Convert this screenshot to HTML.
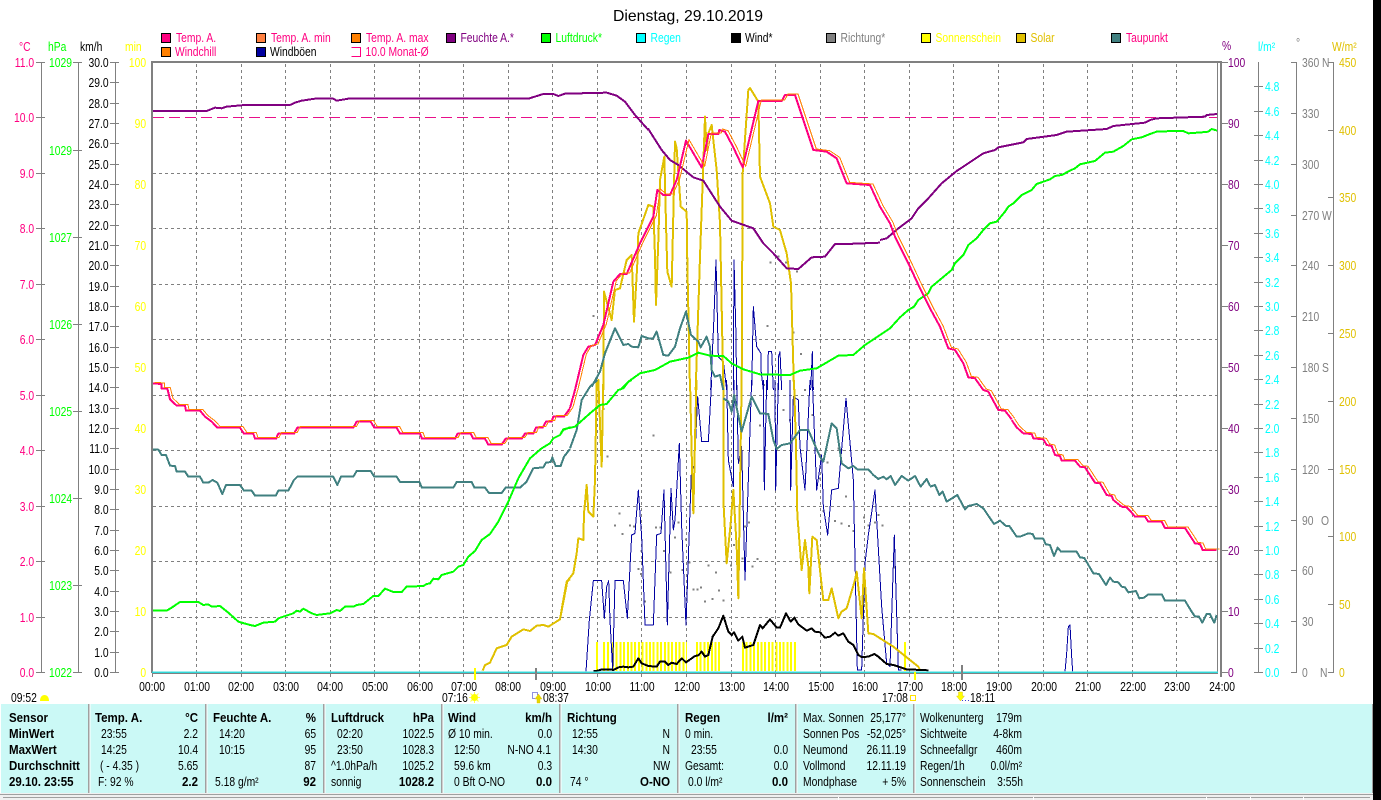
<!DOCTYPE html>
<html><head><meta charset="utf-8"><title>Dienstag, 29.10.2019</title>
<style>
html,body{margin:0;padding:0;background:#000;width:1381px;height:800px;overflow:hidden}
svg{display:block;position:absolute;left:0;top:0}
text{font:13px "Liberation Sans",sans-serif;transform-box:fill-box;transform-origin:0 0;transform:scaleX(.795)}
text.e{text-anchor:end;transform-origin:100% 0}
text.m{text-anchor:middle;transform-origin:50% 0}
text.b{font-weight:bold;transform:scaleX(.885)}
text.t{font-size:16px;transform:none}
.ax line{stroke:#808080;stroke-width:1}
polyline{fill:none;stroke-linejoin:round}
.p{fill:none}
</style></head><body>
<svg width="1381" height="800" viewBox="0 0 1381 800" xmlns="http://www.w3.org/2000/svg">
<rect x="0" y="0" width="1373" height="800" fill="#fff"/>
<text class="t" x="613" y="21" textLength="150" lengthAdjust="spacingAndGlyphs">Dienstag, 29.10.2019</text>

<!-- legend -->
<g stroke="#000" stroke-width="1" shape-rendering="crispEdges">
<rect x="161.5" y="33.5" width="9" height="9" fill="#ff0080"/>
<rect x="256.5" y="33.5" width="9" height="9" fill="#ff8040"/>
<rect x="351.5" y="33.5" width="9" height="9" fill="#ff8000"/>
<rect x="446.5" y="33.5" width="9" height="9" fill="#800080"/>
<rect x="541.5" y="33.5" width="9" height="9" fill="#00ff00"/>
<rect x="636.5" y="33.5" width="9" height="9" fill="#00ffff"/>
<rect x="731.5" y="33.5" width="9" height="9" fill="#000"/>
<rect x="826.5" y="33.5" width="9" height="9" fill="#808080"/>
<rect x="921.5" y="33.5" width="9" height="9" fill="#ffff00"/>
<rect x="1016.5" y="33.5" width="9" height="9" fill="#e0c000"/>
<rect x="1111.5" y="33.5" width="9" height="9" fill="#408080"/>
<rect x="161.5" y="47.5" width="9" height="9" fill="#ff8000"/>
<rect x="256.5" y="47.5" width="9" height="9" fill="#0000a0"/>
</g>
<path d="M351.5 47.5H360.5V56.5H351.5" fill="none" stroke="#ff0080" shape-rendering="crispEdges"/>
<g fill="#ff0080">
<text x="176" y="42">Temp. A.</text><text x="271" y="42">Temp. A. min</text><text x="366" y="42">Temp. A. max</text>
<text x="1126" y="42">Taupunkt</text><text x="175" y="56">Windchill</text><text x="365.5" y="56">10.0 Monat-Ø</text>
</g>
<text x="460.5" y="42" fill="#800080">Feuchte A.*</text>
<text x="555.5" y="42" fill="#00ff00">Luftdruck*</text>
<text x="650.5" y="42" fill="#00ffff">Regen</text>
<text x="745" y="42" fill="#000">Wind*</text>
<text x="840.5" y="42" fill="#808080">Richtung*</text>
<text x="935.5" y="42" fill="#ffff00">Sonnenschein</text>
<text x="1030.5" y="42" fill="#e0c000">Solar</text>
<text x="270" y="56" fill="#000">Windböen</text>

<!-- axis titles -->
<text x="19" y="51" fill="#ff0080">°C</text>
<text x="48" y="51" fill="#00ff00">hPa</text>
<text x="80" y="51" fill="#000">km/h</text>
<text x="125" y="51" fill="#ffff00">min</text>
<text x="1222" y="50" fill="#800080">%</text>
<text x="1258" y="51" fill="#00ffff">l/m²</text>
<text x="1296" y="47" fill="#808080">°</text>
<text x="1332" y="51" fill="#e0c000">W/m²</text>

<!-- axis lines and ticks -->
<g class="ax" shape-rendering="crispEdges">
<line x1="41.5" y1="62" x2="41.5" y2="672"/><line x1="78.5" y1="62" x2="78.5" y2="672"/><line x1="115.5" y1="62" x2="115.5" y2="672"/>
<line x1="1258.5" y1="62" x2="1258.5" y2="672"/><line x1="1296.5" y1="62" x2="1296.5" y2="672"/><line x1="1333.5" y1="62" x2="1333.5" y2="672"/>
</g>
<path shape-rendering="crispEdges" stroke="#808080" fill="none" d="
M36 62.5h9M36 117.5h9M36 173.5h9M36 228.5h9M36 284.5h9M36 339.5h9M36 395.5h9M36 450.5h9M36 506.5h9M36 561.5h9M36 617.5h9M36 672.5h9
M73 62.5h9M73 150.5h9M73 237.5h9M73 324.5h9M73 411.5h9M73 498.5h9M73 585.5h9M73 672.5h9
M110 62.5h9M110 82.5h9M110 103.5h9M110 123.5h9M110 143.5h9M110 164.5h9M110 184.5h9M110 204.5h9M110 225.5h9M110 245.5h9M110 265.5h9M110 286.5h9M110 306.5h9M110 326.5h9M110 347.5h9M110 367.5h9M110 387.5h9M110 408.5h9M110 428.5h9M110 448.5h9M110 469.5h9M110 489.5h9M110 509.5h9M110 530.5h9M110 550.5h9M110 570.5h9M110 591.5h9M110 611.5h9M110 631.5h9M110 652.5h9M110 672.5h9
M1221 62.5h7M1221 123.5h7M1221 184.5h7M1221 245.5h7M1221 306.5h7M1221 367.5h7M1221 428.5h7M1221 489.5h7M1221 550.5h7M1221 611.5h7M1221 672.5h7
M1254 86.5h9M1254 111.5h9M1254 135.5h9M1254 160.5h9M1254 184.5h9M1254 208.5h9M1254 233.5h9M1254 257.5h9M1254 282.5h9M1254 306.5h9M1254 330.5h9M1254 355.5h9M1254 379.5h9M1254 404.5h9M1254 428.5h9M1254 452.5h9M1254 477.5h9M1254 501.5h9M1254 526.5h9M1254 550.5h9M1254 574.5h9M1254 599.5h9M1254 623.5h9M1254 648.5h9M1254 672.5h9
M1291 62.5h6M1291 113.5h6M1291 164.5h6M1291 215.5h6M1291 265.5h6M1291 316.5h6M1291 367.5h6M1291 418.5h6M1291 469.5h6M1291 520.5h6M1291 570.5h6M1291 621.5h6M1291 672.5h6
M1328 62.5h6M1328 130.5h6M1328 197.5h6M1328 265.5h6M1328 333.5h6M1328 401.5h6M1328 469.5h6M1328 536.5h6M1328 604.5h6M1328 672.5h6"/>

<!-- left labels -->
<g fill="#ff0080">
<text class="e" x="34" y="67">11.0</text><text class="e" x="34" y="122">10.0</text><text class="e" x="34" y="178">9.0</text><text class="e" x="34" y="233">8.0</text><text class="e" x="34" y="289">7.0</text><text class="e" x="34" y="344">6.0</text><text class="e" x="34" y="400">5.0</text><text class="e" x="34" y="455">4.0</text><text class="e" x="34" y="511">3.0</text><text class="e" x="34" y="566">2.0</text><text class="e" x="34" y="622">1.0</text><text class="e" x="34" y="677">0.0</text>
</g>
<g fill="#00ff00">
<text class="e" x="72" y="67">1029</text><text class="e" x="72" y="155">1029</text><text class="e" x="72" y="242">1027</text><text class="e" x="72" y="329">1026</text><text class="e" x="72" y="416">1025</text><text class="e" x="72" y="503">1024</text><text class="e" x="72" y="590">1023</text><text class="e" x="72" y="677">1022</text>
</g>
<g fill="#000">
<text class="e" x="108.5" y="67">30.0</text><text class="e" x="108.5" y="87">29.0</text><text class="e" x="108.5" y="108">28.0</text><text class="e" x="108.5" y="128">27.0</text><text class="e" x="108.5" y="148">26.0</text><text class="e" x="108.5" y="169">25.0</text><text class="e" x="108.5" y="189">24.0</text><text class="e" x="108.5" y="209">23.0</text><text class="e" x="108.5" y="230">22.0</text><text class="e" x="108.5" y="250">21.0</text><text class="e" x="108.5" y="270">20.0</text><text class="e" x="108.5" y="291">19.0</text><text class="e" x="108.5" y="311">18.0</text><text class="e" x="108.5" y="331">17.0</text><text class="e" x="108.5" y="352">16.0</text><text class="e" x="108.5" y="372">15.0</text><text class="e" x="108.5" y="392">14.0</text><text class="e" x="108.5" y="413">13.0</text><text class="e" x="108.5" y="433">12.0</text><text class="e" x="108.5" y="453">11.0</text><text class="e" x="108.5" y="474">10.0</text><text class="e" x="108.5" y="494">9.0</text><text class="e" x="108.5" y="514">8.0</text><text class="e" x="108.5" y="535">7.0</text><text class="e" x="108.5" y="555">6.0</text><text class="e" x="108.5" y="575">5.0</text><text class="e" x="108.5" y="596">4.0</text><text class="e" x="108.5" y="616">3.0</text><text class="e" x="108.5" y="636">2.0</text><text class="e" x="108.5" y="657">1.0</text><text class="e" x="108.5" y="677">0.0</text>
</g>
<g fill="#ffff00">
<text class="e" x="146" y="67">100</text><text class="e" x="146" y="128">90</text><text class="e" x="146" y="189">80</text><text class="e" x="146" y="250">70</text><text class="e" x="146" y="311">60</text><text class="e" x="146" y="372">50</text><text class="e" x="146" y="433">40</text><text class="e" x="146" y="494">30</text><text class="e" x="146" y="555">20</text><text class="e" x="146" y="616">10</text><text class="e" x="146" y="677">0</text>
</g>

<!-- right labels -->
<g fill="#800080">
<text x="1228" y="67">100</text><text x="1228" y="128">90</text><text x="1228" y="189">80</text><text x="1228" y="250">70</text><text x="1228" y="311">60</text><text x="1228" y="372">50</text><text x="1228" y="433">40</text><text x="1228" y="494">30</text><text x="1228" y="555">20</text><text x="1228" y="616">10</text><text x="1228" y="677">0</text>
</g>
<g fill="#00ffff">
<text x="1265" y="91">4.8</text><text x="1265" y="116">4.6</text><text x="1265" y="140">4.4</text><text x="1265" y="165">4.2</text><text x="1265" y="189">4.0</text><text x="1265" y="213">3.8</text><text x="1265" y="238">3.6</text><text x="1265" y="262">3.4</text><text x="1265" y="287">3.2</text><text x="1265" y="311">3.0</text><text x="1265" y="335">2.8</text><text x="1265" y="360">2.6</text><text x="1265" y="384">2.4</text><text x="1265" y="409">2.2</text><text x="1265" y="433">2.0</text><text x="1265" y="457">1.8</text><text x="1265" y="482">1.6</text><text x="1265" y="506">1.4</text><text x="1265" y="531">1.2</text><text x="1265" y="555">1.0</text><text x="1265" y="579">0.8</text><text x="1265" y="604">0.6</text><text x="1265" y="628">0.4</text><text x="1265" y="653">0.2</text><text x="1265" y="677">0.0</text>
</g>
<g fill="#808080">
<text x="1302" y="67">360</text><text x="1322" y="67">N</text><text x="1302" y="118">330</text><text x="1302" y="169">300</text><text x="1302" y="220">270</text><text x="1322" y="220">W</text><text x="1302" y="270">240</text><text x="1302" y="321">210</text><text x="1302" y="372">180</text><text x="1322" y="372">S</text><text x="1302" y="423">150</text><text x="1302" y="474">120</text><text x="1302" y="525">90</text><text x="1321" y="525">O</text><text x="1302" y="575">60</text><text x="1302" y="626">30</text><text x="1302" y="677">0</text><text x="1320" y="677">N</text>
</g>
<g fill="#e0c000">
<text x="1339" y="67">450</text><text x="1339" y="135">400</text><text x="1339" y="202">350</text><text x="1339" y="270">300</text><text x="1339" y="338">250</text><text x="1339" y="406">200</text><text x="1339" y="474">150</text><text x="1339" y="541">100</text><text x="1339" y="609">50</text><text x="1339" y="677">0</text>
</g>

<!-- grid -->
<path shape-rendering="crispEdges" stroke="#808080" stroke-width="1" stroke-dasharray="3 3" fill="none" d="
M196.5 64V672M241.5 64V672M285.5 64V672M330.5 64V672M374.5 64V672M419.5 64V672M463.5 64V672M508.5 64V672M552.5 64V672M597.5 64V672M641.5 64V672M686.5 64V672M731.5 64V672M775.5 64V672M820.5 64V672M864.5 64V672M909.5 64V672M953.5 64V672M998.5 64V672M1043.5 64V672M1087.5 64V672M1132.5 64V672M1176.5 64V672
M153 173.5H1218M153 228.5H1218M153 284.5H1218M153 339.5H1218M153 395.5H1218M153 450.5H1218M153 506.5H1218M153 561.5H1218M153 617.5H1218"/>
<path shape-rendering="crispEdges" stroke="#808080" fill="none" d="M152.5 672V677M196.5 672V677M241.5 672V677M285.5 672V677M330.5 672V677M374.5 672V677M419.5 672V677M463.5 672V677M508.5 672V677M552.5 672V677M597.5 672V677M641.5 672V677M686.5 672V677M731.5 672V677M775.5 672V677M820.5 672V677M864.5 672V677M909.5 672V677M953.5 672V677M998.5 672V677M1043.5 672V677M1087.5 672V677M1132.5 672V677M1176.5 672V677M1221.5 672V677"/>
<line x1="153" y1="117.5" x2="1217" y2="117.5" stroke="#e8108a" stroke-dasharray="11 5" shape-rendering="crispEdges"/>

<!-- sunshine bars -->
<g stroke="#ffff00" stroke-width="29" shape-rendering="crispEdges" fill="none">
<path d="M596 656.5h2M603 656.5h2M607 656.5h2"/>
<line x1="612" y1="656.5" x2="687" y2="656.5" stroke-dasharray="2 1.7"/>
<line x1="696" y1="656.5" x2="720" y2="656.5" stroke-dasharray="2 1.7"/>
<line x1="742" y1="656.5" x2="796" y2="656.5" stroke-dasharray="2 1.7"/>
<path d="M904 656.5h2"/>
</g>

<!-- direction dots -->
<g fill="#808080" shape-rendering="crispEdges" transform="translate(560 380) scale(.33333)">
<path d="M175 397h6v6h-6zM162 434h6v6h-6zM207 434h6v6h-6zM219 437h6v6h-6zM185 459h6v6h-6zM285 440h6v6h-6zM299 440h6v6h-6zM352 425h6v6h-6zM342 470h6v6h-6zM309 510h6v6h-6zM375 475h6v6h-6zM242 510h6v6h-6zM232 564h6v6h-6zM240 579h6v6h-6zM329 575h6v6h-6zM364 567h6v6h-6zM385 545h6v6h-6zM252 662h6v6h-6zM397 625h6v6h-6zM409 625h6v6h-6zM420 620h6v6h-6zM442 554h6v6h-6zM465 575h6v6h-6zM432 662h6v6h-6zM454 654h6v6h-6zM474 629h6v6h-6zM487 659h6v6h-6zM277 164h6v6h-6zM120 167h6v6h-6zM140 227h6v6h-6zM127 84h6v6h-6zM545 532h6v6h-6zM530 537h6v6h-6zM510 554h6v6h-6zM519 492h6v6h-6zM552 437h6v6h-6zM564 425h6v6h-6zM575 557h6v6h-6zM589 534h6v6h-6zM597 134h6v6h-6zM609 12h6v6h-6zM732 27h6v6h-6zM754 102h6v6h-6zM687 117h6v6h-6zM667 87h6v6h-6zM799 245h6v6h-6zM777 292h6v6h-6zM787 390h6v6h-6zM822 420h6v6h-6zM842 427h6v6h-6zM864 435h6v6h-6zM877 450h6v6h-6zM909 410h6v6h-6zM922 434h6v6h-6zM942 424h6v6h-6zM952 402h6v6h-6zM965 434h6v6h-6zM855 347h6v6h-6zM832 202h6v6h-6zM842 207h6v6h-6zM1000 560h6v6h-6z"/>
</g>
<g fill="#808080" shape-rendering="crispEdges" transform="translate(560 90) scale(.33333)">
<path d="M97 675h6v6h-6zM629 515h6v6h-6zM652 497h6v6h-6zM675 515h6v6h-6zM708 542h6v6h-6zM620 705h6v6h-6zM698 725h6v6h-6zM720 789h6v6h-6zM609 882h6v6h-6z"/>
</g>

<!-- wind gusts -->
<g stroke="#0000a0" stroke-width="3" shape-rendering="crispEdges">
<g transform="translate(560 380) scale(.33333)">
<polyline points="78,875 88,720 100,602 125,602 133,715 140,620 146,602 150,720 158,870 165,602 190,602 202,715 208,600 215,465 225,460 235,330 245,470 255,735 280,735 290,465 303,460 312,330 322,735 333,325 340,450 345,420 358,190 365,440 378,735 395,250 403,270 413,50 425,185 445,185 455,0"/>
<polyline points="500,0 505,240 520,320 522,0"/>
<polyline points="530,0 535,250 545,200 555,600 575,0"/>
<polyline points="610,0 613,330 620,0"/>
<polyline points="645,0 647,330 655,0"/>
<polyline points="690,0 692,330 700,50 715,60 720,200 735,330 750,0"/>
<polyline points="757,0 770,330 785,225 790,380 803,465 815,330 835,325 858,55 880,300 892,870 905,870 915,550 925,465 945,330 965,680 980,850 990,860 1003,465 1015,870 1025,870"/>
</g>
<g transform="translate(560 90) scale(.33333)">
<polyline points="452,900 462,680 468,510 475,800 490,815 500,900"/>
<polyline points="520,900 522,510 528,740 530,900"/>
<polyline points="575,900 580,650 590,770 603,790 603,840 610,900"/>
<polyline points="622,900 625,785 635,785 640,900"/>
<polyline points="655,900 655,800 660,785 665,900"/>
<polyline points="752,900 757,785 760,900"/>
</g>
<g transform="translate(900 420) scale(.33333)">
<polyline points="495,755 500,700 505,620 510,615 515,710 518,755"/>
</g>
</g>

<!-- solar -->
<g stroke="#e0c000" stroke-width="6" shape-rendering="crispEdges">
<g transform="translate(140 340) scale(.33333)">
<polyline points="1028,992 1035,975 1050,968 1070,925 1100,915 1115,890 1150,868 1170,873 1190,857 1210,855 1225,860 1260,838 1270,780 1280,725 1290,718"/>
</g>
<g transform="translate(560 380) scale(.33333)">
<polyline points="0,718 15,640 22,603 40,580 50,520 55,475 70,480 72,400 80,315 85,395 100,410 105,300 110,10 115,0 125,260 130,0"/>
<polyline points="390,0 395,220 400,400 408,50 410,0"/>
<polyline points="490,0 490,360 500,550 512,430 520,330 530,500 535,655 545,0"/>
<polyline points="702,0 708,200 712,405 725,570 735,480 745,560 748,640 757,470 770,480 790,660 805,660 815,625 835,715 845,695 860,685 885,600 890,575 905,715 912,565 925,760 940,762 1000,800 1050,840 1075,860 1080,870"/>
</g>
<g transform="translate(560 90) scale(.33333)">
<polyline points="130,900 132,605 155,690 165,600 180,595 200,510 215,495 222,695 232,520 235,430 265,345 280,350 285,500 288,645 295,450 300,270 313,200 318,400 322,545 335,590 345,155 350,175 362,350 380,365 382,520 390,900"/>
<polyline points="407,900 420,500 435,80 440,180 445,130 455,105 470,240 480,400 490,900"/>
<polyline points="545,900 548,250 565,0 570,-6 595,35 600,260 630,340 640,410 660,420 680,490 693,580 697,720 702,900"/>
</g>
</g>

<!-- dew point -->
<g stroke="#408080" stroke-width="6" shape-rendering="crispEdges">
<g transform="translate(140 340) scale(.33333)">
<polyline points="34,329 55,329 65,345 78,345 90,377 105,378 110,395 135,395 145,410 180,410 190,428 205,428 218,420 232,428 247,462 258,435 300,435 312,452 335,452 345,467 407,467 415,452 445,452 462,420 472,410 580,410 592,435 603,410 640,410 650,393 692,393 703,410 770,410 780,426 838,426 846,443 940,443 950,426 995,426 1003,443 1035,443 1047,459 1085,459 1097,443 1140,443 1160,425 1180,385 1210,382 1218,368 1232,366 1237,352 1247,378 1262,378 1272,350 1290,327"/>
</g>
<g transform="translate(560 380) scale(.33333)">
<polyline points="30,205 50,150 65,60 90,20 112,0"/>
<polyline points="490,55 505,65 515,95 522,45 545,155 575,50 600,100 625,102 640,180 650,207 665,195 690,190 705,170 720,150 745,150 780,230 790,245 815,130 830,145 845,250 865,265 880,258 892,268 925,268 940,285 955,297 970,290 980,298 992,288 1005,315 1025,288 1045,302 1065,288 1082,320 1100,297 1110,318"/>
</g>
<g transform="translate(560 90) scale(.33333)">
<polyline points="95,890 120,845 135,790 165,715 190,765 205,762 215,770 235,772 245,738 265,745 280,745 290,725 310,795 325,797 345,770 360,715 378,665 393,735 415,755 422,772 440,740 450,770 455,840 465,860 480,855 490,900"/>
</g>
<g transform="translate(900 420) scale(.33333)">
<polyline points="90,200 105,195 118,225 128,215 140,245 172,225 195,268 205,258 230,252 250,265 282,312 300,302 318,318 328,318 350,350 360,350 385,340 398,342 405,356 430,356 437,373 450,375 462,408 473,383 483,395 530,395 540,412 553,414 580,460 597,462 618,495 630,473 640,485 655,487 665,500 675,502 685,517 708,513 718,535 732,533 745,523 785,523 795,542 855,542 875,575 885,590 897,590 907,608 920,582 930,582 943,608 950,585"/>
</g>
</g>

<!-- pressure -->
<g stroke="#00ff00" stroke-width="6" shape-rendering="crispEdges">
<g transform="translate(140 340) scale(.33333)">
<polyline points="34,812 80,812 95,803 120,786 175,786 190,795 205,793 215,800 240,798 265,818 295,845 330,855 345,858 370,848 405,845 415,835 460,820 470,812 480,815 490,806 515,820 530,825 570,820 590,810 600,813 615,800 640,800 650,795 670,792 700,768 715,768 735,746 760,756 785,756 800,740 850,738 860,732 870,730 880,716 895,718 905,705 940,695 955,680 970,675 985,650 1005,633 1025,600 1050,582 1075,545 1105,485 1135,415 1170,355 1205,325 1230,310 1240,295 1260,285 1270,270 1290,262"/>
</g>
<g transform="translate(560 380) scale(.33333)">
<polyline points="0,165 10,148 45,140 90,100 120,75 140,72 175,30 190,25 205,5 215,0"/>
</g>
<g transform="translate(560 90) scale(.33333)">
<polyline points="180,900 205,875 240,850 285,840 330,815 385,803 415,788 450,797 490,798 515,820 550,838 600,853 690,855 720,842 770,835 835,797 880,795 915,765 960,735"/>
</g>
<g transform="translate(840 100) scale(.33333)">
<polyline points="120,705 150,685 180,652 205,630 222,620 235,600 265,580 275,560 335,510 345,490 370,465 385,435 410,415 430,390 450,370 470,365 495,335 505,320 520,310 545,285 575,270 590,252 630,238 645,228 665,225 690,212 705,205 720,193 765,183 795,158 820,155 850,138 875,118 905,112 930,102 950,95 1000,93 1030,93 1045,100 1085,97 1105,95 1115,87 1132,92"/>
</g>
</g>

<!-- humidity -->
<g stroke="#800080" stroke-width="6" shape-rendering="crispEdges">
<g transform="scale(.33333)">
<polyline points="453,333 620,333 645,323 665,325 680,320 735,315 870,315 885,308 905,302 945,296 1000,296 1010,302 1045,296 1380,296"/>
</g>
<g transform="translate(460 0) scale(.33333)">
<polyline points="0,296 205,296 250,282 280,282 295,288 315,281 440,278 470,287 495,305 525,345 565,390"/>
</g>
<g transform="translate(560 90) scale(.33333)">
<polyline points="264,115 270,125 305,180 330,210 355,225 400,262 430,272 480,350 515,392 580,415 610,460 640,490 680,535 715,537 755,502 795,500 825,462 860,462 960,458"/>
</g>
<g transform="translate(840 100) scale(.33333)">
<polyline points="120,420 140,415 175,385 215,355 235,325 265,295 305,250 350,213 385,190 430,160 465,150 475,142 550,127 560,117 650,105 680,95 800,87 820,78 915,68 930,60 950,55 1095,50 1100,45 1132,42"/>
</g>
</g>

<!-- temperature -->
<defs>
<g id="temp">
<g transform="translate(140 340) scale(.33333)">
<polyline points="34,130 65,132 65,146 82,146 90,178 110,197 135,197 138,212 180,212 195,230 215,245 232,263 300,263 312,281 340,281 345,296 408,296 415,281 462,281 472,263 640,263 650,245 692,245 703,263 770,263 780,281 840,281 846,296 945,296 953,281 992,281 1000,296 1035,296 1045,314 1085,314 1097,296 1145,296 1155,281 1180,281 1188,263 1208,263 1218,245 1235,245 1240,230 1272,230 1290,205"/>
</g>
<g transform="translate(560 90) scale(.33333)">
<polyline points="30,954 45,900 70,795 85,770 105,765 130,705 160,575 180,552 200,552 240,460 280,380 292,300 310,315 330,315 350,270 378,152 425,232 445,132 475,132 478,120 495,125 520,172 548,232 595,33 665,33 675,15 705,15 760,180 800,185 830,205 860,280 930,285 960,350"/>
</g>
<g transform="translate(840 100) scale(.33333)">
<polyline points="120,320 150,370 165,410 205,490 240,565 270,625 300,680 325,745 345,750 370,790 385,832 405,835 430,870 445,875 475,930 495,932 515,958"/>
</g>
<g transform="translate(900 420) scale(.33333)">
<polyline points="335,0 350,22 370,40 395,42 400,55 430,58 440,75 455,78 465,105 480,108 485,122 525,122 540,140 555,142 585,188 600,190 620,225 635,228 640,240 665,260 680,262 690,272 705,290 735,290 745,305 785,305 795,324 855,324 885,370 900,372 908,390 950,390"/>
</g>
</g>
</defs>
<use href="#temp" stroke="#ff0080" stroke-width="6" shape-rendering="crispEdges"/>
<use href="#temp" stroke="#ff8000" stroke-width="3" transform="translate(3,-1)" shape-rendering="crispEdges"/>

<!-- wind -->
<g stroke="#000" stroke-width="6" shape-rendering="crispEdges" transform="translate(560 380) scale(.33333)">
<polyline points="100,873 115,872 125,868 150,868 160,870 175,862 190,860 205,862 220,860 235,835 245,850 265,858 290,860 300,845 315,845 325,855 335,848 350,852 365,835 378,847 405,828 415,826 425,815 435,830 445,825 458,770 475,745 490,707 505,755 515,765 522,757 535,782 547,770 555,803 580,795 600,735 608,745 630,718 650,743 660,743 678,700 692,725 703,713 715,733 740,752 755,745 765,755 780,757 795,773 810,770 825,758 835,767 850,760 865,785 880,795 895,825 905,831 925,830 943,822 955,830 980,852 1000,855 1040,868 1105,871"/>
</g>

<!-- frame -->
<g shape-rendering="crispEdges">
<rect x="151" y="61" width="1071" height="2" fill="#808080"/>
<rect x="151" y="61" width="2" height="612" fill="#808080"/>
<rect x="1217" y="62" width="1" height="611" fill="#808080"/>
<rect x="1220" y="61" width="2" height="616" fill="#808080"/>
<rect x="152" y="672" width="1066" height="1" fill="#30d8d8"/>
<rect x="152" y="671" width="1066" height="1" fill="#40e0e0" opacity=".5"/>
<rect x="152" y="673" width="1066" height="1" fill="#808080"/>
<rect x="474" y="668" width="2" height="12" fill="#ffff00"/>
<rect x="535" y="668" width="2" height="12" fill="#808080"/>
<rect x="914" y="672" width="2" height="8" fill="#ffff00"/>
<rect x="961" y="665" width="2" height="15" fill="#808080"/>
</g>

<!-- hours -->
<g fill="#000">
<text class="m" x="152" y="691">00:00</text><text class="m" x="197" y="691">01:00</text><text class="m" x="241" y="691">02:00</text><text class="m" x="286" y="691">03:00</text><text class="m" x="330" y="691">04:00</text><text class="m" x="375" y="691">05:00</text><text class="m" x="420" y="691">06:00</text><text class="m" x="464" y="691">07:00</text><text class="m" x="508" y="691">08:00</text><text class="m" x="553" y="691">09:00</text><text class="m" x="598" y="691">10:00</text><text class="m" x="642" y="691">11:00</text><text class="m" x="687" y="691">12:00</text><text class="m" x="732" y="691">13:00</text><text class="m" x="776" y="691">14:00</text><text class="m" x="821" y="691">15:00</text><text class="m" x="865" y="691">16:00</text><text class="m" x="910" y="691">17:00</text><text class="m" x="954" y="691">18:00</text><text class="m" x="999" y="691">19:00</text><text class="m" x="1044" y="691">20:00</text><text class="m" x="1088" y="691">21:00</text><text class="m" x="1133" y="691">22:00</text><text class="m" x="1177" y="691">23:00</text><text class="m" x="1222" y="691">24:00</text>
<text x="11" y="702">09:52</text><text x="442" y="702">07:16</text><text x="543" y="702">08:37</text><text x="882" y="702">17:08</text><text x="970" y="702">18:11</text>
</g>
<!-- sun/moon icons -->
<path d="M40 701c0-4 2-6 4.500-6s4.500 2 4.500 6z" fill="#ffff00"/>
<g fill="#ffff00"><circle cx="474.500" cy="697.500" r="3.500"/></g>
<path d="M469 697.500h11M474.500 692v11M470.500 693.500l8 8M478.500 693.500l-8 8" stroke="#ffff00" stroke-width="1" opacity=".7"/>
<rect x="532.500" y="692.500" width="5" height="6" fill="none" stroke="#2020c0" stroke-dasharray="1 1"/>
<path d="M538.500 694l3.500 5h-2v4h-3v-4h-2z" fill="#e8d800" stroke="#d8c000" stroke-width=".4"/>
<rect x="910.500" y="695.500" width="5" height="5" fill="none" stroke="#ffe000"/>
<path d="M958.500 692h4v4h2l-4 5-4-5h2z" fill="#ffff00" stroke="#d8c000" stroke-width=".4"/>
<path d="M962 700.500h7" stroke="#4040d0" stroke-dasharray="1 2"/>

<!-- panel -->
<rect x="1" y="704" width="1372" height="89" fill="#cbf9f6"/>
<g shape-rendering="crispEdges">
<path d="M88 704h1.500v89H88zM205 704h1.500v89H205zM323 704h1.500v89H323zM441 704h1.500v89H441zM559 704h1.500v89H559zM677 704h1.500v89H677zM795 704h1.500v89H795zM913 704h1.500v89H913z" fill="#a0a0a0"/>
<path d="M89.500 704h1v89h-1zM206.500 704h1v89h-1zM324.500 704h1v89h-1zM442.500 704h1v89h-1zM560.500 704h1v89h-1zM678.500 704h1v89h-1zM796.500 704h1v89h-1zM914.500 704h1v89h-1z" fill="#fff"/>
<rect x="1372" y="704" width="1" height="92" fill="#a0a0a0"/>
<rect x="0" y="793" width="1373" height="7" fill="#f0f0f0"/>
<rect x="0" y="794" width="1373" height="1" fill="#a0a0a0"/>
<rect x="3" y="797" width="1367" height="1" fill="#a0a0a0"/>
<path d="M838 797h1v3h-1zM1033 797h1v3h-1zM1206 797h1v3h-1zM1250 797h1v3h-1zM1303 797h1v3h-1z" fill="#fff"/>
</g>
<g fill="#000">
<text class="b" x="9" y="722">Sensor</text><text class="b" x="9" y="738">MinWert</text><text class="b" x="9" y="754">MaxWert</text><text class="b" x="9" y="770">Durchschnitt</text><text class="b" x="9" y="786">29.10. 23:55</text>

<text class="b" x="95" y="722">Temp. A.</text><text class="b e" x="198" y="722">°C</text>
<text x="101" y="738">23:55</text><text class="e" x="198" y="738">2.2</text>
<text x="101" y="754">14:25</text><text class="e" x="198" y="754">10.4</text>
<text x="100" y="770">( - 4.35 )</text><text class="e" x="198" y="770">5.65</text>
<text x="98" y="786">F: 92 %</text><text class="b e" x="198" y="786">2.2</text>

<text class="b" x="213" y="722">Feuchte A.</text><text class="b e" x="316" y="722">%</text>
<text x="219" y="738">14:20</text><text class="e" x="316" y="738">65</text>
<text x="219" y="754">10:15</text><text class="e" x="316" y="754">95</text>
<text class="e" x="316" y="770">87</text>
<text x="215" y="786">5.18 g/m²</text><text class="b e" x="316" y="786">92</text>

<text class="b" x="331" y="722">Luftdruck</text><text class="b e" x="434" y="722">hPa</text>
<text x="337" y="738">02:20</text><text class="e" x="434" y="738">1022.5</text>
<text x="337" y="754">23:50</text><text class="e" x="434" y="754">1028.3</text>
<text x="331" y="770">^1.0hPa/h</text><text class="e" x="434" y="770">1025.2</text>
<text x="331" y="786">sonnig</text><text class="b e" x="434" y="786">1028.2</text>

<text class="b" x="448" y="722">Wind</text><text class="b e" x="552" y="722">km/h</text>
<text x="448" y="738">Ø 10 min.</text><text class="e" x="552" y="738">0.0</text>
<text x="454" y="754">12:50</text><text class="e" x="551" y="754">N-NO 4.1</text>
<text x="454" y="770">59.6 km</text><text class="e" x="552" y="770">0.3</text>
<text x="454" y="786">0 Bft O-NO</text><text class="b e" x="552" y="786">0.0</text>

<text class="b" x="567" y="722">Richtung</text>
<text x="572" y="738">12:55</text><text class="e" x="670" y="738">N</text>
<text x="572" y="754">14:30</text><text class="e" x="670" y="754">N</text>
<text class="e" x="670" y="770">NW</text>
<text x="570" y="786">74 °</text><text class="b e" x="670" y="786">O-NO</text>

<text class="b" x="685" y="722">Regen</text><text class="b e" x="788" y="722">l/m²</text>
<text x="685" y="738">0 min.</text>
<text x="691" y="754">23:55</text><text class="e" x="788" y="754">0.0</text>
<text x="685" y="770">Gesamt:</text><text class="e" x="788" y="770">0.0</text>
<text x="688" y="786">0.0 l/m²</text><text class="b e" x="788" y="786">0.0</text>

<text x="803" y="722">Max. Sonnen</text><text class="e" x="906" y="722">25,177°</text>
<text x="803" y="738">Sonnen Pos</text><text class="e" x="906" y="738">-52,025°</text>
<text x="803" y="754">Neumond</text><text class="e" x="906" y="754">26.11.19</text>
<text x="803" y="770">Vollmond</text><text class="e" x="906" y="770">12.11.19</text>
<text x="803" y="786">Mondphase</text><text class="e" x="906" y="786">+ 5%</text>

<text x="920" y="722">Wolkenunterg</text><text class="e" x="1022" y="722">179m</text>
<text x="920" y="738">Sichtweite</text><text class="e" x="1022" y="738">4-8km</text>
<text x="920" y="754">Schneefallgr</text><text class="e" x="1022" y="754">460m</text>
<text x="920" y="770">Regen/1h</text><text class="e" x="1022" y="770">0.0l/m²</text>
<text x="920" y="786">Sonnenschein</text><text class="e" x="1023" y="786">3:55h</text>
</g>
</svg>
</body></html>
